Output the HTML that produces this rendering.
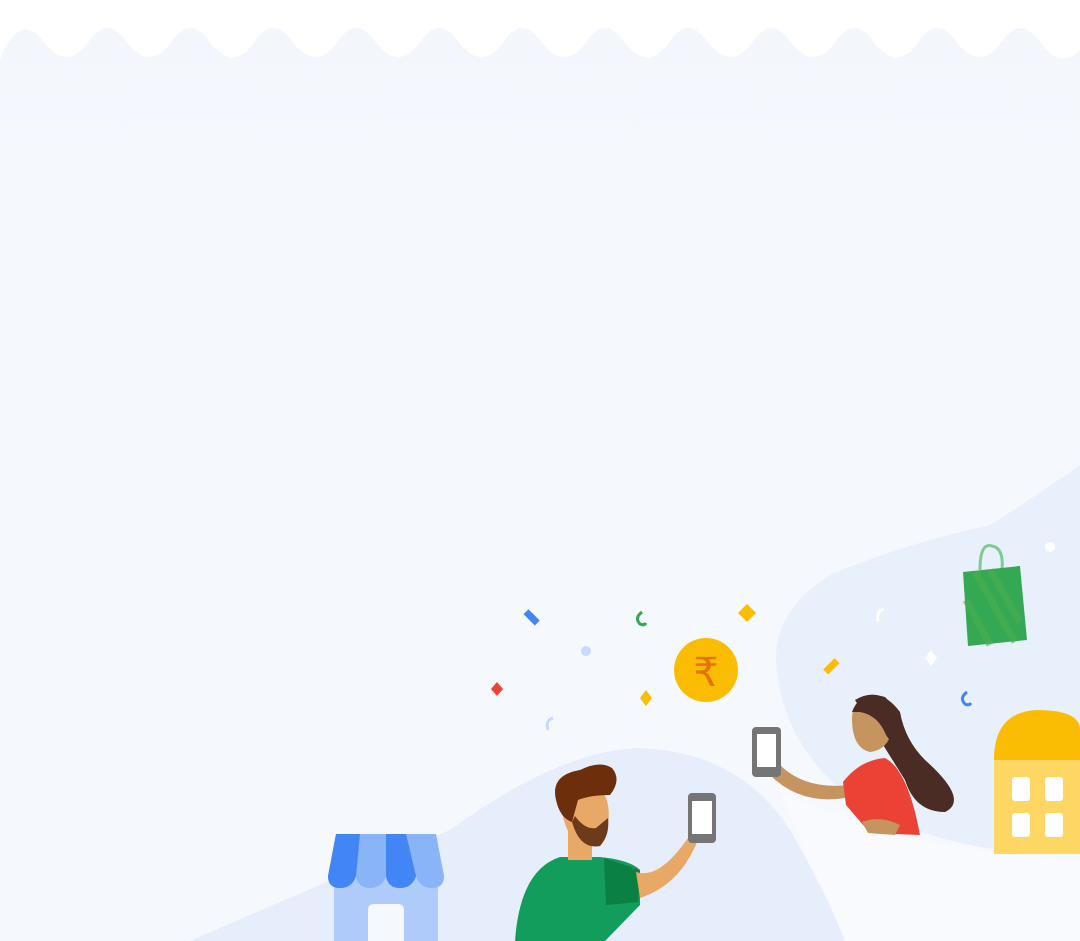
<!DOCTYPE html>
<html><head><meta charset="utf-8"><style>
html,body{margin:0;padding:0;width:1080px;height:941px;overflow:hidden;background:#f5f9fe}
svg{display:block}
</style></head><body>
<svg width="1080" height="941" viewBox="0 0 1080 941" xmlns="http://www.w3.org/2000/svg">
<defs><linearGradient id="g" x1="0" y1="0" x2="0" y2="1"><stop offset="0" stop-color="#f2f6fc"/><stop offset="0.15" stop-color="#f5f9fe"/><stop offset="1" stop-color="#f5f9fe"/></linearGradient></defs>
<rect width="1080" height="941" fill="url(#g)"/>
<path d="M0 0 H1080 V50 Q1060 70 1042 44 Q1020 12 1000 44 Q980 70 958 44 Q937 12 917 44 Q897 70 875 44 Q854 12 834 44 Q814 70 792 44 Q771 12 751 44 Q731 70 709 44 Q688 12 668 44 Q648 70 626 44 Q605 12 585 44 Q565 70 543 44 Q522 12 502 44 Q482 70 460 44 Q439 12 419 44 Q399 70 377 44 Q356 12 336 44 Q316 70 294 44 Q273 12 253 44 Q233 70 211 44 Q190 12 170 44 Q150 70 128 44 Q107 12 87 44 Q67 70 45 44 Q24 12 4 50 L0 60 Z" fill="#ffffff"/>
<path d="M1080 465 Q1030 500 990 525 Q900 545 830 575 Q775 610 776 660 Q780 730 830 780 Q890 835 1000 850 L1080 852 Z" fill="#e8f0fc"/>
<path d="M780 790 Q900 850 1080 860 V941 H840 Z" fill="#f8fafe"/>
<path d="M190 941 Q330 880 450 830 Q560 750 640 748 Q740 752 790 830 Q830 900 845 941 Z" fill="#e6eefc"/>
<rect x="524" y="614" width="16" height="7" fill="#4285f4" transform="rotate(45 532 617)"/>
<path d="M642 612 q-8 6 -2 12 q4 2 6 -1" stroke="#34a853" stroke-width="3" fill="none"/>
<path d="M747 604 l9 9 l-9 9 l-9 -9z" fill="#fbbc04"/>
<circle cx="586" cy="651" r="5" fill="#c6dafc"/>
<path d="M497 682 l6 7 l-6 7 l-6 -7z" fill="#ea4335"/>
<path d="M646 690 l6 8 l-6 8 l-6 -8z" fill="#fbbc04"/>
<path d="M553 718 q-8 2 -5 12" stroke="#c6dafc" stroke-width="3" fill="none"/>
<path d="M884 609 q-8 2 -6 12" stroke="#fff" stroke-width="3" fill="none"/>
<rect x="823" y="663" width="16" height="7" fill="#fbbc04" transform="rotate(-45 831 666)"/>
<path d="M931 650 l6 8 l-6 8 l-6 -8z" fill="#fff"/>
<path d="M967 692 q-8 6 -2 12 q4 2 6 -1" stroke="#4285f4" stroke-width="3" fill="none"/>
<circle cx="1050" cy="547" r="5" fill="#fff"/>
<circle cx="706" cy="670" r="32" fill="#fbbc04"/>
<text x="706" y="686" text-anchor="middle" font-family="Liberation Sans, DejaVu Sans, sans-serif" font-size="40" fill="#e37400">₹</text>
<path d="M980 570 q0 -28 12 -24 q12 2 10 24" stroke="#81c995" stroke-width="3" fill="none"/>
<path d="M963 572 L1020 566 L1027 640 L968 646 Z" fill="#34a853"/>
<path d="M975 572 l40 70 M990 570 l30 52 M966 600 l24 45" stroke="#4caf50" stroke-width="7" opacity=".6"/>
<path d="M994 760 Q994 712 1037 710 Q1080 710 1080 730 V760 Z" fill="#fbbc04"/>
<rect x="994" y="760" width="86" height="94" fill="#fdd663"/>
<g fill="#fff"><rect x="1012" y="777" width="18" height="24" rx="3"/><rect x="1045" y="777" width="18" height="24" rx="3"/><rect x="1012" y="813" width="18" height="24" rx="3"/><rect x="1045" y="813" width="18" height="24" rx="3"/></g>
<rect x="334" y="870" width="104" height="71" fill="#aecbfa"/>
<path d="M368 941 V910 q0 -6 6 -6 h24 q6 0 6 6 V941 Z" fill="#f5f8fd"/>
<path d="M336 834 H436 L444 876 Q444 888 432 888 Q420 888 416 876 Q412 888 400 888 Q388 888 386 876 Q382 888 370 888 Q358 888 356 876 Q352 888 340 888 Q328 888 328 876 Z" fill="#8ab4f8"/>
<path d="M336 834 H360 L356 876 Q352 888 340 888 Q328 888 328 876 Z" fill="#4285f4"/>
<path d="M386 834 H406 L416 876 Q412 888 400 888 Q388 888 386 876 Z" fill="#4285f4"/>
<path d="M515 941 Q520 870 560 857 L600 857 Q630 860 640 870 V905 L605 941 Z" fill="#129d5d"/>
<path d="M604 858 L640 870 L638 902 L606 905 Z" fill="#0b8043"/>
<path d="M636 872 Q660 880 690 835 L698 840 Q680 885 640 898 Z" fill="#e8a866"/>
<path d="M568 820 L592 825 L592 860 L568 860 Z" fill="#e8a866"/>
<path d="M560 800 Q568 780 595 785 Q612 795 608 825 Q600 846 585 846 Q565 842 560 800Z" fill="#e8a866"/>
<path d="M572 822 Q580 850 600 846 Q610 835 608 818 L596 828 Q585 830 575 816 Z" fill="#6d3a1b"/>
<path d="M556 800 Q550 775 580 770 Q600 760 612 768 Q622 780 610 795 Q590 795 578 800 L572 822 Q560 818 556 800Z" fill="#6d2e0b"/>
<rect x="688" y="793" width="28" height="50" rx="4" fill="#757575"/>
<rect x="692" y="801" width="20" height="33" fill="#fff"/>
<path d="M770 775 Q800 805 845 798 L850 785 Q805 790 780 765Z" fill="#c5945f"/>
<rect x="752" y="727" width="29" height="50" rx="4" fill="#757575"/>
<rect x="757" y="734" width="19" height="33" fill="#fff"/>
<path d="M855 700 Q880 685 900 712 Q905 740 925 760 Q970 800 945 812 Q915 812 905 780 Z" fill="#4a2c24"/>
<path d="M852 718 Q852 700 875 698 Q890 705 892 730 Q888 750 870 752 Q852 748 852 718Z" fill="#c5945f"/>
<path d="M852 712 Q860 690 885 697 Q900 710 893 745 L886 735 Q878 715 860 712Z" fill="#4a2c24"/>
<path d="M843 782 Q860 760 885 758 Q908 770 920 835 L870 833 L846 805 Z" fill="#ea4335"/>
<path d="M862 822 Q880 815 900 825 L895 835 L868 833Z" fill="#c5945f"/>
</svg>
</body></html>
